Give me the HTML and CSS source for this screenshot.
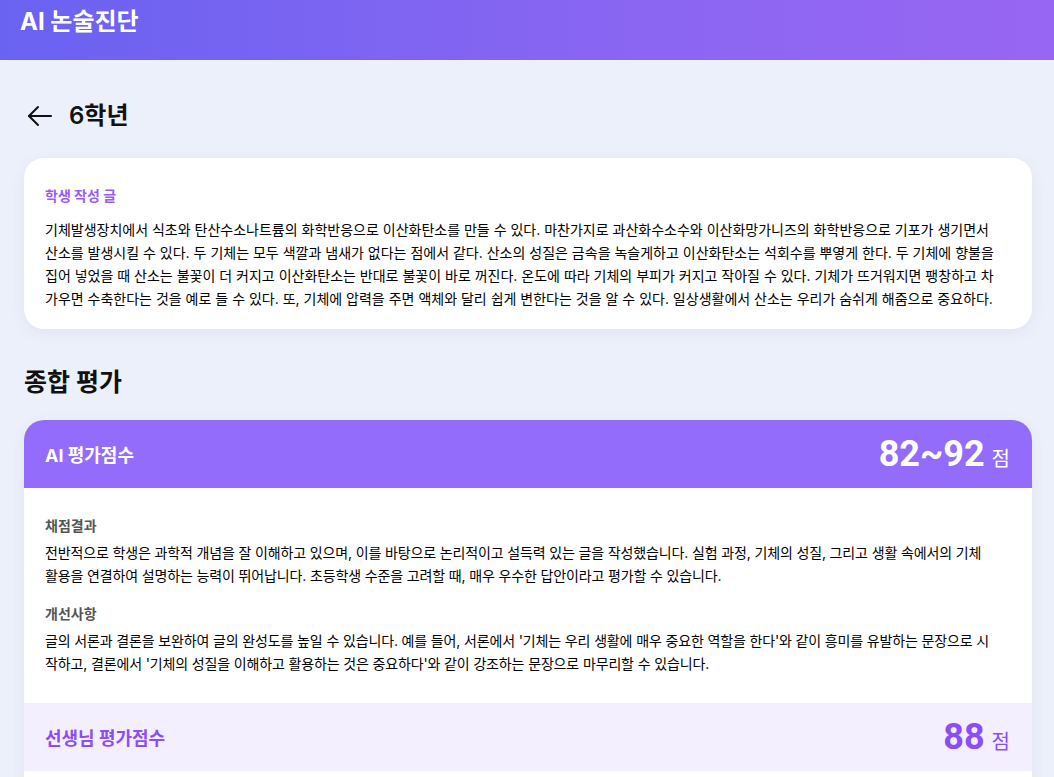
FILE: index.html
```html
<!DOCTYPE html>
<html lang="ko">
<head>
<meta charset="utf-8">
<title>AI 논술진단</title>
<link rel="stylesheet" href="styles.css">
</head>
<body>
<header class="topbar">
  <h1 class="brand">AI 논술진단</h1>
</header>
<main class="page">
  <div class="back-row">
    <svg class="back-icon" width="26" height="22" viewBox="0 0 26 22" fill="none" stroke="#111" stroke-width="2" stroke-linecap="round" stroke-linejoin="round">
      <path d="M24 11H2"/>
      <path d="M11 2L2 11L11 20"/>
    </svg>
    <h2 class="grade">6학년</h2>
  </div>

  <section class="card essay">
    <div class="label purple">학생 작성 글</div>
    <p class="body-text">기체발생장치에서 식초와 탄산수소나트륨의 화학반응으로 이산화탄소를 만들 수 있다. 마찬가지로 과산화수소수와 이산화망가니즈의 화학반응으로 기포가 생기면서 산소를 발생시킬 수 있다. 두 기체는 모두 색깔과 냄새가 없다는 점에서 같다. 산소의 성질은 금속을 녹슬게하고 이산화탄소는 석회수를 뿌옇게 한다. 두 기체에 향불을 집어 넣었을 때 산소는 불꽃이 더 커지고 이산화탄소는 반대로 불꽃이 바로 꺼진다. 온도에 따라 기체의 부피가 커지고 작아질 수 있다. 기체가 뜨거워지면 팽창하고 차가우면 수축한다는 것을 예로 들 수 있다. 또, 기체에 압력을 주면 액체와 달리 쉽게 변한다는 것을 알 수 있다. 일상생활에서 산소는 우리가 숨쉬게 해줌으로 중요하다.</p>
  </section>

  <h2 class="section-title">종합 평가</h2>

  <section class="card eval">
    <div class="score-head ai">
      <span class="score-title">AI 평가점수</span>
      <span class="score"><span class="num">82~92</span><span class="unit">점</span></span>
    </div>
    <div class="eval-body">
      <div class="block">
        <div class="label gray">채점결과</div>
        <p class="body-text">전반적으로 학생은 과학적 개념을 잘 이해하고 있으며, 이를 바탕으로 논리적이고 설득력 있는 글을 작성했습니다. 실험 과정, 기체의 성질, 그리고 생활 속에서의 기체 활용을 연결하여 설명하는 능력이 뛰어납니다. 초등학생 수준을 고려할 때, 매우 우수한 답안이라고 평가할 수 있습니다.</p>
      </div>
      <div class="block">
        <div class="label gray">개선사항</div>
        <p class="body-text">글의 서론과 결론을 보완하여 글의 완성도를 높일 수 있습니다. 예를 들어, 서론에서 '기체는 우리 생활에 매우 중요한 역할을 한다'와 같이 흥미를 유발하는 문장으로 시작하고, 결론에서 '기체의 성질을 이해하고 활용하는 것은 중요하다'와 같이 강조하는 문장으로 마무리할 수 있습니다.</p>
      </div>
    </div>
    <div class="score-head teacher">
      <span class="score-title">선생님 평가점수</span>
      <span class="score"><span class="num">88</span><span class="unit">점</span></span>
    </div>
    <div class="eval-body tail"></div>
  </section>
</main>
</body>
</html>
```

FILE: styles.css
```css
* { box-sizing: border-box; }

html, body {
  margin: 0;
  padding: 0;
}

body {
  background: #ecf0fa;
  font-family: Inter, "Noto Sans CJK KR", "Noto Sans", sans-serif;
  color: #111;
}

.topbar {
  height: 60px;
  background: linear-gradient(90deg, #6a62f1 0%, #8a66f2 60%, #9866f2 100%);
  padding: 6px 20px 0;
}

.brand {
  margin: 0;
  color: #fff;
  font-size: 24px;
  font-weight: 700;
  line-height: 31px;
}

.page {
  padding: 0 22px 0 24px;
}

.back-row {
  display: flex;
  align-items: center;
  gap: 16px;
  padding: 40px 0 26px 3px;
}

.back-icon { display: block; }

.grade {
  margin: 0;
  font-size: 24px;
  font-weight: 600;
  line-height: 32px;
}

.card {
  background: #fff;
  border-radius: 20px;
  box-shadow: 0 4px 14px rgba(90, 100, 160, 0.08);
}

.essay {
  padding: 28px 36px 18px 21px;
  min-height: 171px;
}

.label {
  font-size: 14px;
  font-weight: 700;
  line-height: 20px;
}

.label.purple { color: #9b5cf6; }
.label.gray { color: #555; }

.body-text {
  margin: 0;
  font-size: 14px;
  line-height: 23px;
  font-weight: 400;
  color: #000;
}

.essay .body-text { margin-top: 12px; }

.section-title {
  margin: 0;
  font-size: 25px;
  font-weight: 700;
  line-height: 30px;
  padding: 38px 0 23px;
}

.eval {
  overflow: hidden;
}

.score-head {
  height: 68px;
  display: flex;
  align-items: center;
  justify-content: space-between;
  padding: 0 22px 0 21px;
}

.score-head.ai {
  background: #936cfc;
  color: #fff;
}

.score-head.teacher {
  background: #f3effe;
  color: #8b4df5;
}

.score-title {
  font-size: 18px;
  font-weight: 700;
}

.score {
  display: flex;
  align-items: baseline;
  gap: 7px;
}

.num {
  font-size: 36px;
  font-weight: 700;
  line-height: 40px;
  font-family: Roboto, Inter, sans-serif;
}

.unit {
  font-size: 20px;
  font-weight: 400;
}

.eval-body {
  padding: 28px 36px 28px 21px;
}

.eval-body .body-text { letter-spacing: -0.14px; }

.eval-body .label { margin-bottom: 5px; }

.block + .block { margin-top: 17px; }

.eval-body.tail { padding: 0; height: 40px; }
```
